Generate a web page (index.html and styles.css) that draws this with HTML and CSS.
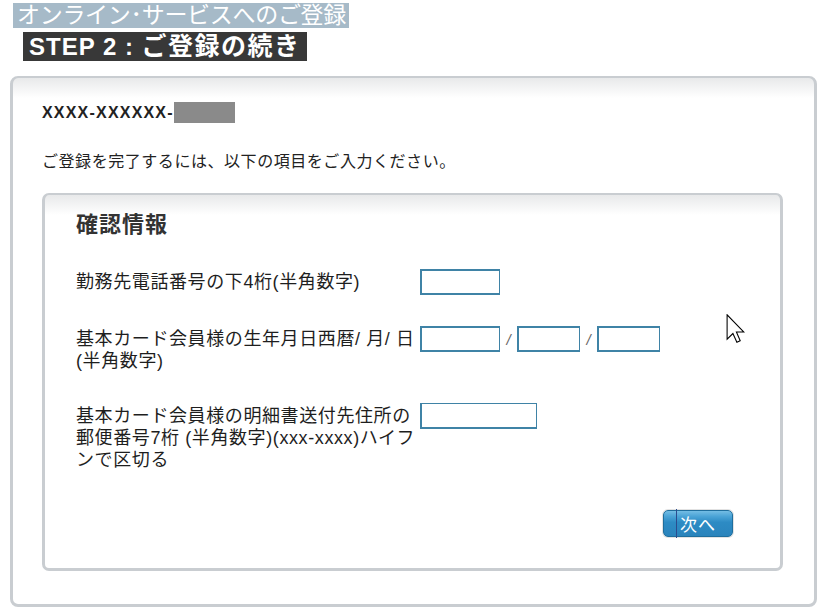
FILE: index.html
```html
<!DOCTYPE html>
<html lang="ja">
<head>
<meta charset="utf-8">
<title>オンライン･サービスへのご登録 STEP 2</title>
<link rel="stylesheet" href="styles.css">
</head>
<body>
<header class="page-head">
  <h1 class="service-title">オンライン･サービスへのご登録</h1>
  <h2 class="step-title">STEP 2 : <span class="step-jp">ご登録の続き</span></h2>
</header>
<main class="panel">
  <div class="account-row"><span class="account-no">XXXX-XXXXXX-</span><span class="masked"></span></div>
  <p class="intro">ご登録を完了するには、以下の項目をご入力ください。</p>
  <section class="inner-panel">
    <h3 class="section-title">確認情報</h3>
    <div class="form-row">
      <label class="field-label">勤務先電話番号の下4桁(半角数字)</label>
      <div class="field"><input class="text-input w-short" type="text"></div>
    </div>
    <div class="form-row">
      <label class="field-label">基本カード会員様の生年月日西暦/ 月/ 日<br>(半角数字)</label>
      <div class="field">
        <input class="text-input w-short" type="text"><span class="slash">/</span><input class="text-input w-mini" type="text"><span class="slash">/</span><input class="text-input w-mini" type="text">
      </div>
    </div>
    <div class="form-row">
      <label class="field-label">基本カード会員様の明細書送付先住所の<br>郵便番号7桁 (半角数字)(xxx-xxxx)ハイフ<br>ンで区切る</label>
      <div class="field"><input class="text-input w-long thin-top" type="text"></div>
    </div>
    <div class="actions"><button class="next-btn" type="button">次へ</button></div>
  </section>
</main>
<svg class="cursor" width="19" height="29" viewBox="0 0 12 19" aria-hidden="true">
  <path d="M0.5 0.5 L0.5 16.5 L4.3 12.8 L6.9 18.5 L9.1 17.5 L6.6 11.8 L11.5 11.8 Z" fill="#fff" stroke="#000" stroke-width="0.7" stroke-linejoin="miter"/>
</svg>
</body>
</html>
```

FILE: styles.css
```css
* { box-sizing: border-box; }

html, body {
  margin: 0;
  background: #fff;
}

body {
  position: relative;
  width: 821px;
  height: 612px;
  overflow: hidden;
  font-family: "Liberation Sans", "Noto Sans CJK JP", sans-serif;
  color: #222;
}

.page-head {
  display: flex;
  flex-direction: column;
  align-items: flex-start;
  padding-top: 3px;
}

.service-title {
  margin: 0 0 0 13px;
  padding: 0 3px 0 4px;
  background: #a6bac8;
  color: #fff;
  font-size: 23px;
  line-height: 25px;
  font-weight: normal;
  letter-spacing: -0.3px;
  white-space: nowrap;
}

.step-title {
  margin: 4px 0 0 23px;
  padding: 0 6px 0 6px;
  background: #383838;
  color: #fff;
  font-size: 24px;
  line-height: 28px;
  font-weight: bold;
  letter-spacing: 1px;
  white-space: nowrap;
}

.step-jp {
  font-size: 25px;
  letter-spacing: 1.5px;
}

.panel {
  display: block;
  margin: 15px 4px 0 10px;
  padding: 24px 31px 33px 29px;
  border: 3px solid #c9cdd1;
  border-top-width: 2px;
  border-radius: 8px;
  background: linear-gradient(#e8e9ea, #fff 20px);
}

.account-row {
  display: flex;
  align-items: center;
  height: 21px;
}

.account-no {
  font-size: 16px;
  font-weight: bold;
  letter-spacing: 1.2px;
  color: #222;
}

.masked {
  width: 61px;
  height: 21px;
  background: #8a8a8a;
}

.intro {
  margin: 28px 0 0;
  font-size: 16px;
  line-height: 22px;
  letter-spacing: 0.55px;
  color: #222;
  white-space: nowrap;
}

.inner-panel {
  margin-top: 20px;
  padding: 17px 0 31px 31px;
  border: 3px solid #c9cdd1;
  border-top-width: 2px;
  border-radius: 7px;
  background: linear-gradient(#e8e9ea, #fff 20px);
}

.section-title {
  margin: 0;
  font-size: 22px;
  line-height: 26px;
  font-weight: bold;
  letter-spacing: 1px;
  color: #333;
}

.form-row {
  display: flex;
  align-items: flex-start;
  margin-top: 31px;
}

.field-label {
  flex: none;
  width: 344px;
  padding-top: 2px;
  font-size: 18px;
  line-height: 22px;
  letter-spacing: 0.6px;
  color: #1e1e1e;
  white-space: nowrap;
}

.field {
  display: flex;
  align-items: center;
}

.text-input {
  height: 26px;
  margin: 0;
  padding: 0 3px;
  border: 2px solid #3f83a6;
  border-right-width: 1px;
  border-radius: 0;
  background: #fff;
  font-size: 14px;
  outline: none;
}

.thin-top { border-top-width: 1px; }

.w-short { width: 80px; }
.w-mini { width: 63px; }
.w-long { width: 117px; }

.slash {
  width: 17px;
  text-align: center;
  font-size: 15px;
  font-style: italic;
  color: #666;
}

.actions {
  display: flex;
  justify-content: flex-end;
  margin-top: 39px;
  padding-right: 47px;
}

.next-btn {
  position: relative;
  width: 70px;
  height: 27px;
  padding: 0;
  border: 1px solid #1f6e9d;
  border-radius: 5px;
  background: linear-gradient(#74bde4 0%, #4aa3d6 22%, #2d8bc4 45%, #2a84bc 100%);
  box-shadow: 0 0 0 1px #e2e2e2;
  color: #fff;
  font-family: "Noto Sans CJK JP", sans-serif;
  font-size: 17px;
  line-height: 24px;
  letter-spacing: 1px;
}

.next-btn::before {
  content: "";
  position: absolute;
  left: 12px;
  top: -2px;
  bottom: -2px;
  width: 1px;
  background: #2b4c8e;
}

.cursor {
  position: absolute;
  left: 726px;
  top: 314px;
}
```
